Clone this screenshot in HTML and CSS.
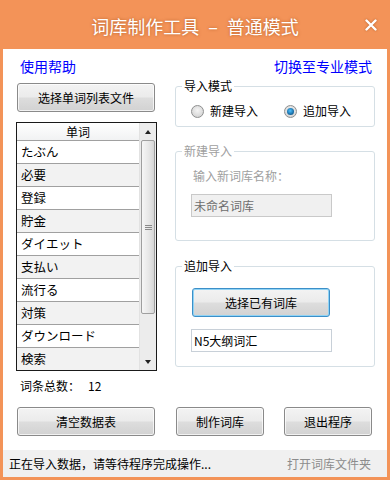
FILE: index.html
```html
<!DOCTYPE html>
<html lang="zh-CN">
<head>
    <meta charset="UTF-8">
    <meta name="viewport" content="width=device-width, initial-scale=1.0">
    <title>词库制作工具 - 普通模式</title>
    <link rel="stylesheet" href="styles.css">
</head>
<body>
    <div class="window">
        <div class="titlebar">
            <span class="title">词库制作工具 – 普通模式</span>
            <svg class="close" width="12" height="12" viewBox="0 0 12 12">
                <path d="M1.5 1.5 L10.5 10.5 M10.5 1.5 L1.5 10.5" stroke="#fff" stroke-width="2.4" stroke-linecap="round"/>
            </svg>
        </div>

        <div class="frame">
            <div class="client">
                <div class="links">
                    <a href="#">使用帮助</a>
                    <a href="#">切换至专业模式</a>
                </div>

                <div class="main">
                    <div class="left">
                        <button class="btn btn-wide">选择单词列表文件</button>

                        <div class="list">
                            <div class="grid">
                                <div class="grid-head">单词</div>
                                <div class="row">たぶん</div>
                                <div class="row">必要</div>
                                <div class="row">登録</div>
                                <div class="row">貯金</div>
                                <div class="row">ダイエット</div>
                                <div class="row">支払い</div>
                                <div class="row">流行る</div>
                                <div class="row">対策</div>
                                <div class="row">ダウンロード</div>
                                <div class="row">検索</div>
                            </div>
                            <div class="vscroll">
                                <div class="arrow arrow-up"></div>
                                <div class="thumb"><span class="grip"></span></div>
                                <div class="track"></div>
                                <div class="arrow arrow-down"></div>
                            </div>
                        </div>

                        <div class="count">词条总数：<span class="count-num">12</span></div>
                    </div>

                    <div class="right">
                        <fieldset class="group">
                            <legend>导入模式</legend>
                            <div class="group-body radios">
                                <label class="radio"><span class="dot"></span>新建导入</label>
                                <label class="radio checked"><span class="dot"></span>追加导入</label>
                            </div>
                        </fieldset>

                        <fieldset class="group disabled">
                            <legend>新建导入</legend>
                            <div class="group-body new-body">
                                <div class="field-label">输入新词库名称：</div>
                                <div class="textbox textbox-disabled">未命名词库</div>
                            </div>
                        </fieldset>

                        <fieldset class="group">
                            <legend>追加导入</legend>
                            <div class="group-body append-body">
                                <button class="btn btn-wide btn-focus">选择已有词库</button>
                                <div class="textbox">N5大纲词汇</div>
                            </div>
                        </fieldset>
                    </div>
                </div>

                <div class="actions">
                    <button class="btn btn-wide">清空数据表</button>
                    <button class="btn btn-small">制作词库</button>
                    <button class="btn btn-small">退出程序</button>
                </div>
            </div>

            <div class="statusbar">
                <span>正在导入数据，请等待程序完成操作...</span>
                <span class="status-link">打开词库文件夹</span>
            </div>
        </div>
    </div>
</body>
</html>
```

FILE: styles.css
```css
* {
    box-sizing: border-box;
}
body {
    margin: 0;
    font-family: "Noto Sans CJK SC", "Liberation Sans", sans-serif;
    font-size: 12px;
    color: #000;
    text-spacing-trim: space-all;
}
.window {
    width: 390px;
    height: 480px;
    background: #f39358;
    display: flex;
    flex-direction: column;
}
.titlebar {
    height: 49px;
    display: flex;
    align-items: center;
    justify-content: center;
    position: relative;
}
.title {
    color: #fff;
    font-size: 18px;
    line-height: 22px;
    margin-top: 3px;
    word-spacing: 5px;
    text-shadow: 0 0 3px rgba(140, 60, 10, 0.6);
}
.close {
    position: absolute;
    right: 13px;
    top: 19px;
    filter: drop-shadow(0 0 1px rgba(140, 60, 10, 0.6));
}
.frame {
    flex: 1;
    margin: 0 3px 3px;
    display: flex;
    flex-direction: column;
}
.client {
    flex: 1;
    background: #fff;
}

/* top links */
.links {
    display: flex;
    justify-content: space-between;
    padding: 8px 15px 0 17px;
    height: 26px;
    margin-bottom: 4px;
}
.links a {
    color: #0000ff;
    text-decoration: none;
    font-size: 14px;
    line-height: 18px;
}

.main {
    display: flex;
    height: 315px;
}
.left {
    width: 141px;
    margin-left: 13px;
}
.right {
    width: 200px;
    margin-left: 18px;
}

/* buttons */
.btn {
    font-family: inherit;
    font-size: 12px;
    color: #000;
    height: 29px;
    padding: 0;
    border: 1px solid #8a8a8a;
    border-radius: 3px;
    background: linear-gradient(#f3f3f3 0%, #ebebeb 48%, #dddddd 52%, #d2d2d2 100%);
    box-shadow: inset 0 0 0 1px rgba(255, 255, 255, 0.7);
}
.btn-wide {
    width: 138px;
}
.btn-small {
    width: 88px;
}
.btn-focus {
    border-color: #3c8fc8;
    box-shadow: inset 0 0 0 1px #8fd3f5;
}
.left .btn {
    margin: 4px 0 0 1px;
}

/* word list */
.list {
    margin-top: 10px;
    height: 249px;
    border: 1px solid #1a1a1a;
    display: flex;
    overflow: hidden;
}
.grid {
    flex: 1;
    overflow: hidden;
    font-family: "Noto Sans CJK JP", "Liberation Sans", sans-serif;
    font-size: 12.5px;
}
.grid-head {
    height: 18px;
    line-height: 17px;
    font-size: 12px;
    text-align: center;
    border-bottom: 1px solid #a0a0a0;
    background: linear-gradient(#ffffff, #f1f2f3);
}
.row {
    height: 23px;
    line-height: 22px;
    padding-left: 4px;
    border-bottom: 1px solid #a0a0a0;
    background: #fff;
}
.row:nth-child(odd) {
    background: #f2f2f2;
}
.vscroll {
    width: 17px;
    background: #ececec;
    border-left: 1px solid #e2e2e2;
    display: flex;
    flex-direction: column;
}
.arrow {
    height: 17px;
    display: flex;
    align-items: center;
    justify-content: center;
}
.arrow::before {
    content: "";
    border-left: 3.5px solid transparent;
    border-right: 3.5px solid transparent;
}
.arrow-up::before {
    border-bottom: 4px solid #222;
}
.arrow-down::before {
    border-top: 4px solid #222;
}
.thumb {
    height: 174px;
    margin: 0 1px;
    border: 1px solid #9f9f9f;
    border-radius: 2px;
    background: linear-gradient(to right, #f6f6f6, #e6e6e6 60%, #d6d6d6);
    display: flex;
    align-items: center;
    justify-content: center;
}
.grip {
    width: 7px;
    height: 5px;
    border-top: 1px solid #8a8a8a;
    border-bottom: 1px solid #8a8a8a;
    position: relative;
}
.grip::after {
    content: "";
    position: absolute;
    left: 0;
    right: 0;
    top: 1px;
    border-top: 1px solid #8a8a8a;
}
.track {
    flex: 1;
}
.count {
    margin-top: 7px;
    padding-left: 4px;
    line-height: 16px;
}
.count-num {
    margin-left: 8px;
}

/* group boxes */
.group {
    margin: 0;
    padding: 0;
    border: 1px solid #d5dfe5;
    border-radius: 3px;
}
.group + .group {
    margin-top: 17px;
}
.group:last-child {
    margin-top: 18px;
}
.group legend {
    margin-left: 6px;
    padding: 0 2px;
    line-height: 14px;
}
.disabled legend,
.disabled .field-label {
    color: #a0a0a0;
}
.radios {
    display: flex;
    padding: 11px 0 8px 15px;
    gap: 26px;
}
.radio {
    display: flex;
    align-items: center;
    gap: 6px;
    line-height: 14px;
}
.dot {
    width: 13px;
    height: 13px;
    border-radius: 50%;
    border: 1px solid #8e8f8f;
    background: radial-gradient(circle at 50% 40%, #f4f4f4, #d8d8d8 70%, #c6c6c6);
    display: flex;
    align-items: center;
    justify-content: center;
}
.checked .dot::after {
    content: "";
    width: 7px;
    height: 7px;
    border-radius: 50%;
    background: radial-gradient(circle at 45% 40%, #4cc1ff, #1a6fa8 60%, #0e3f66);
}
.new-body {
    padding: 10px 0 23px 15px;
}
.field-label {
    line-height: 16px;
    padding-left: 2px;
    margin-bottom: 10px;
}
.textbox {
    width: 141px;
    height: 23px;
    line-height: 21px;
    padding-left: 2px;
    border: 1px solid #c8d0d8;
    background: #fff;
}
.textbox-disabled {
    background: #f0f0f0;
    border-color: #c9c9c9;
    color: #6d6d6d;
}
.append-body {
    padding: 15px 0 14px 15px;
}
.append-body .btn {
    display: block;
    margin-left: 1px;
    margin-bottom: 12px;
}

/* bottom */
.actions {
    display: flex;
    padding-left: 14px;
    margin-top: 13px;
}
.actions .btn + .btn {
    margin-left: 21px;
}
.actions .btn:last-child {
    margin-left: 20px;
}
.statusbar {
    height: 27px;
    background: #f0f0f0;
    display: flex;
    align-items: center;
    justify-content: space-between;
    padding: 0 16px 0 6px;
    line-height: 16px;
}
.status-link {
    color: #8c8c8c;
}
```
